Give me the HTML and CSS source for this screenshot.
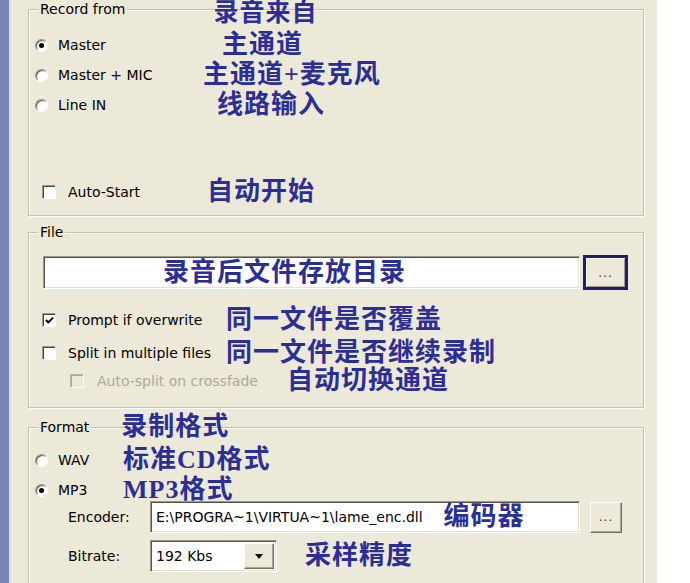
FILE: index.html
```html
<!DOCTYPE html>
<html lang="zh-CN">
<head>
<meta charset="utf-8">
<title>Recording settings</title>
<link rel="stylesheet" href="styles.css">
</head>
<body>
<div class="app">
  <div class="rail"></div>
  <div class="panel">

    <section class="group g-record">
      <div class="legend-row">
        <span class="legend">Record from</span>
        <span class="ann o-leg1">录音来自</span>
      </div>
      <div class="row r-first">
        <span class="opt w-rec"><span class="radio checked"></span>Master</span>
        <span class="ann o22">主通道</span>
      </div>
      <div class="row">
        <span class="opt w-rec"><span class="radio"></span>Master + MIC</span>
        <span class="ann o3">主通道+麦克风</span>
      </div>
      <div class="row">
        <span class="opt w-rec"><span class="radio"></span>Line IN</span>
        <span class="ann o17">线路输入</span>
      </div>
      <div class="row r-auto">
        <span class="opt w-rec"><span class="check"></span>Auto-Start</span>
        <span class="ann o7">自动开始</span>
      </div>
    </section>

    <section class="group g-file">
      <div class="legend-row">
        <span class="legend">File</span>
      </div>
      <div class="path-row">
        <div class="field path"><span class="ann in-path">录音后文件存放目录</span></div>
        <div class="btn btn-default">...</div>
      </div>
      <div class="row r-prompt">
        <span class="opt w-file"><span class="check checked"><svg viewBox="0 0 11 11" width="11" height="11"><path d="M2 5 L4.3 7.4 L9 2.6" fill="none" stroke="#000" stroke-width="2"/></svg></span>Prompt if overwrite</span>
        <span class="ann">同一文件是否覆盖</span>
      </div>
      <div class="row r-split">
        <span class="opt w-file"><span class="check"></span>Split in multiple files</span>
        <span class="ann">同一文件是否继续录制</span>
      </div>
      <div class="row r-sub">
        <span class="opt w-sub disabled"><span class="check check-sub"></span>Auto-split on crossfade</span>
        <span class="ann">自动切换通道</span>
      </div>
    </section>

    <section class="group g-format">
      <div class="legend-row">
        <span class="legend">Format</span>
        <span class="ann o-leg3">录制格式</span>
      </div>
      <div class="row r-wav">
        <span class="opt w-fmt"><span class="radio"></span>WAV</span>
        <span class="ann">标准CD格式</span>
      </div>
      <div class="row r-mp3">
        <span class="opt w-fmt"><span class="radio checked"></span>MP3</span>
        <span class="ann">MP3格式</span>
      </div>
      <div class="row r-enc">
        <span class="flabel">Encoder:</span>
        <div class="field enc"><span class="val">E:\PROGRA~1\VIRTUA~1\lame_enc.dll</span><span class="ann in-enc">编码器</span></div>
        <div class="btn btn-small">...</div>
      </div>
      <div class="row r-bit">
        <span class="flabel">Bitrate:</span>
        <div class="field select"><span class="val">192 Kbs</span><span class="drop"><span class="tri"></span></span></div>
        <span class="ann o-bit">采样精度</span>
      </div>
    </section>

  </div>
</div>
</body>
</html>
```

FILE: styles.css
```css
html, body {
  margin: 0;
  padding: 0;
  background: #ffffff;
}

body {
  font-family: "DejaVu Sans", "Liberation Sans", sans-serif;
  font-size: 14px;
  color: #000;
}

.app {
  display: flex;
  height: 583px;
  overflow: hidden;
}

.rail {
  flex: none;
  width: 9px;
  background: #7a86b2;
  border-right: 2px solid #d9dbe8;
}

.panel {
  flex: none;
  width: 646px;
  box-sizing: border-box;
  padding: 9px 13px 0 17px;
  background: #ece9d8;
}

/* etched group box */
.group {
  border: 1px solid #c3c0ad;
  box-shadow: inset 1px 1px 0 #fbfaf5, 1px 1px 0 #fbfaf5;
}

.g-record { padding-bottom: 8px; }
.g-file { margin-top: 16px; padding-bottom: 13px; }
.g-format { margin-top: 19px; padding-bottom: 30px; }

.legend-row {
  display: flex;
  align-items: center;
  height: 24px;
  margin-top: -13px;
}

.legend {
  margin-left: 9px;
  padding: 0 2px;
  background: #ece9d8;
  line-height: 16px;
}

/* blue annotations */
.ann {
  font-family: "Liberation Serif", "Noto Sans CJK SC", serif;
  font-weight: 700;
  font-size: 26px;
  line-height: 26px;
  letter-spacing: 1px;
  color: #2c2e97;
  white-space: nowrap;
}

.o-leg1 {
  margin-left: 86px;
  position: relative;
  top: 4px;
  line-height: 24px;
  font-size: 25px;
}
.o-leg3 { margin-left: 30px; }
.o22 { margin-left: 22px; }
.o3 { margin-left: 3px; }
.o17 { margin-left: 17px; }
.o7 { margin-left: 7px; }
.o-bit { margin-left: 28px; }

.row {
  display: flex;
  align-items: center;
  height: 30px;
}

.r-first { margin-top: 9px; }
.r-auto { margin-top: 57px; }
.r-prompt { margin-top: 15px; }
.r-split { margin-top: 3px; }
.r-sub { height: 26px; }
.r-wav { margin-top: 7px; height: 28px; }
.r-mp3 { margin-top: 5px; height: 22px; }
.r-enc { height: 32px; }
.r-bit { margin-top: 7px; height: 32px; }

.opt {
  display: flex;
  align-items: center;
  flex: none;
  white-space: nowrap;
}

.w-rec { width: 171px; }
.w-file { width: 197px; }
.w-sub { width: 258px; }
.w-fmt { width: 94px; }

.disabled { color: #aca899; }

/* radio button */
.radio {
  flex: none;
  position: relative;
  width: 13px;
  height: 13px;
  box-sizing: border-box;
  margin: 0 10px 0 6px;
  border-radius: 50%;
  background: #ffffff;
  border: 1px solid;
  border-color: #9a978a #ffffff #ffffff #9a978a;
  box-shadow: inset 1px 1px 0 #5d5b55;
}

.radio.checked::after {
  content: "";
  position: absolute;
  left: 3px;
  top: 3px;
  width: 5px;
  height: 5px;
  border-radius: 50%;
  background: #000;
}

/* checkbox */
.check {
  flex: none;
  display: flex;
  align-items: center;
  justify-content: center;
  width: 14px;
  height: 14px;
  box-sizing: border-box;
  margin: 0 12px 0 13px;
  background: #ffffff;
  border: 1px solid;
  border-color: #9a978a #ffffff #ffffff #9a978a;
  box-shadow: inset 1px 1px 0 #4a4945;
}

.check-sub {
  margin-left: 41px;
  margin-right: 13px;
  background: #ece9d8;
  border-color: #b9b6a6 #ffffff #ffffff #b9b6a6;
  box-shadow: inset 1px 1px 0 #aca899;
}

/* sunken fields */
.field {
  display: flex;
  align-items: center;
  box-sizing: border-box;
  background: #ffffff;
  border: 1px solid;
  border-color: #9a978a #ffffff #ffffff #9a978a;
  box-shadow: inset 1px 1px 0 #55534d, inset -1px -1px 0 #e4e1d2;
}

.path-row {
  display: flex;
  align-items: center;
  height: 35px;
  margin-top: 11px;
}

.path {
  width: 537px;
  height: 33px;
  margin-left: 14px;
}

.in-path { margin-left: 119px; }

.flabel {
  flex: none;
  width: 82px;
  margin-left: 39px;
}

.enc {
  width: 430px;
  height: 32px;
}

.val {
  padding-left: 5px;
  white-space: nowrap;
}

.in-enc { margin-left: 21px; }

.select {
  width: 127px;
  height: 32px;
  justify-content: space-between;
}

.drop {
  display: flex;
  align-items: center;
  justify-content: center;
  width: 30px;
  height: 26px;
  box-sizing: border-box;
  margin-right: 2px;
  background: #ece9d8;
  border: 1px solid;
  border-color: #ffffff #716f64 #716f64 #ffffff;
  box-shadow: inset -1px -1px 0 #aca899;
}

.tri {
  width: 0;
  height: 0;
  border-left: 4px solid transparent;
  border-right: 4px solid transparent;
  border-top: 5px solid #000;
}

/* buttons */
.btn {
  flex: none;
  display: flex;
  align-items: center;
  justify-content: center;
  box-sizing: border-box;
  background: #ece9d8;
  font-size: 12px;
  color: #333;
  letter-spacing: 1px;
}

.btn-default {
  width: 45px;
  height: 35px;
  margin-left: 3px;
  border: 3px solid #201d6e;
  box-shadow: inset 1px 1px 0 #ffffff, inset -1px -1px 0 #9d9a88;
}

.btn-small {
  width: 32px;
  height: 31px;
  margin-left: 10px;
  border: 1px solid;
  border-color: #ffffff #716f64 #716f64 #ffffff;
  box-shadow: inset -1px -1px 0 #aca899;
}
```
